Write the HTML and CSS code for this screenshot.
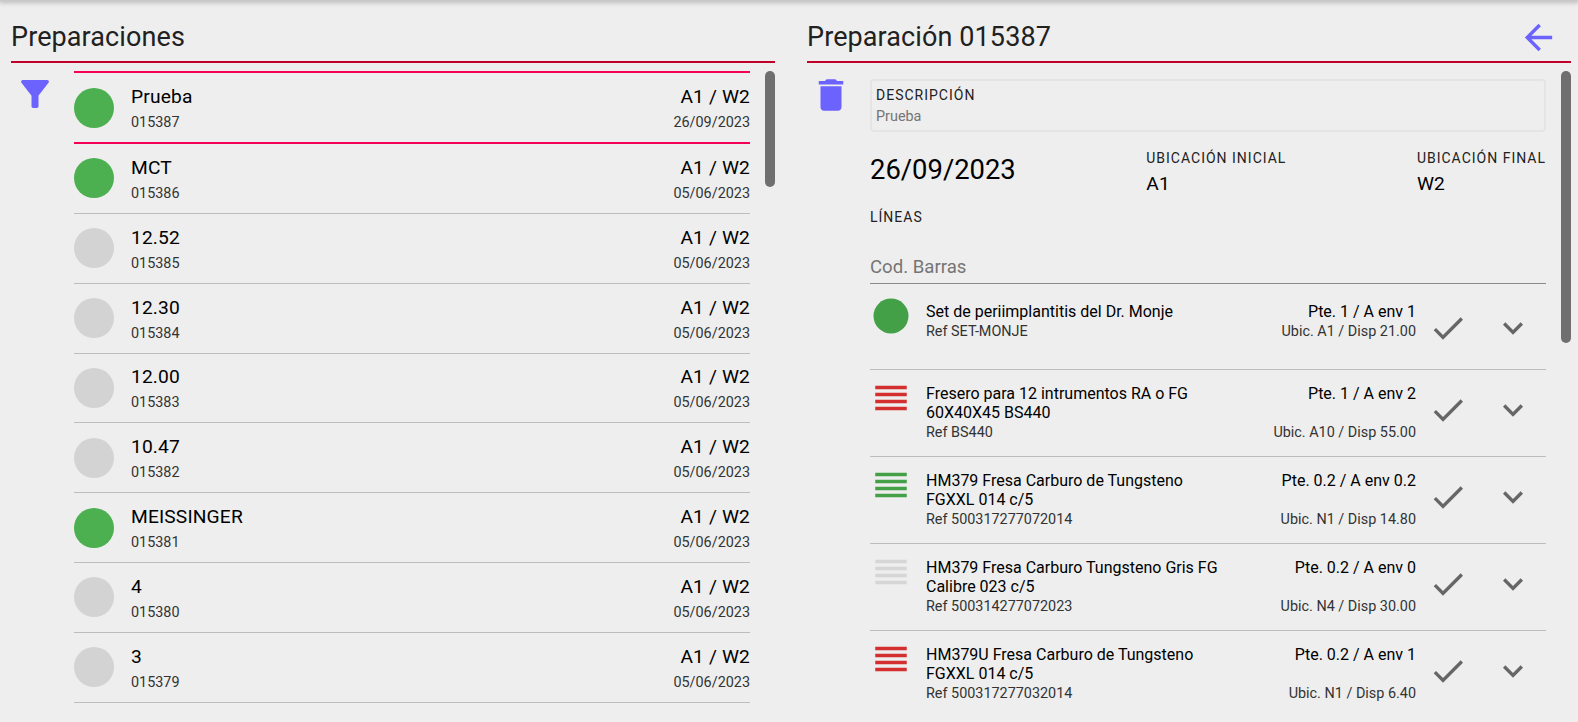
FILE: index.html
```html
<!DOCTYPE html>
<html lang="es">
<head>
    <meta charset="UTF-8">
    <meta name="viewport" content="width=device-width, initial-scale=1.0">
    <title>Preparaciones</title>
    <link rel="stylesheet" href="styles.css">
</head>
<body>
    <div class="topbar"></div>

    <main class="panels">
        <!-- listado -->
        <section class="panel panel-left">
            <header class="panel-head">
                <h1>Preparaciones</h1>
            </header>
            <div class="panel-body">
                <div class="side">
                    <svg class="icon-side" viewBox="0 0 24 24"><path d="M4.25 5.61C6.27 8.2 10 13 10 13v6c0 .55.45 1 1 1h2c.55 0 1-.45 1-1v-6s3.72-4.8 5.74-7.39A.998.998 0 0 0 18.95 4H5.04c-.83 0-1.3.95-.79 1.61z"/></svg>
                </div>
                <ul class="prep-list">
                    <li class="prep selected">
                        <span class="dot green"></span>
                        <div class="prep-main"><div class="big">Prueba</div><div class="small">015387</div></div>
                        <div class="prep-end"><div class="big">A1 / W2</div><div class="small">26/09/2023</div></div>
                    </li>
                    <li class="prep">
                        <span class="dot green"></span>
                        <div class="prep-main"><div class="big">MCT</div><div class="small">015386</div></div>
                        <div class="prep-end"><div class="big">A1 / W2</div><div class="small">05/06/2023</div></div>
                    </li>
                    <li class="prep">
                        <span class="dot"></span>
                        <div class="prep-main"><div class="big">12.52</div><div class="small">015385</div></div>
                        <div class="prep-end"><div class="big">A1 / W2</div><div class="small">05/06/2023</div></div>
                    </li>
                    <li class="prep">
                        <span class="dot"></span>
                        <div class="prep-main"><div class="big">12.30</div><div class="small">015384</div></div>
                        <div class="prep-end"><div class="big">A1 / W2</div><div class="small">05/06/2023</div></div>
                    </li>
                    <li class="prep">
                        <span class="dot"></span>
                        <div class="prep-main"><div class="big">12.00</div><div class="small">015383</div></div>
                        <div class="prep-end"><div class="big">A1 / W2</div><div class="small">05/06/2023</div></div>
                    </li>
                    <li class="prep">
                        <span class="dot"></span>
                        <div class="prep-main"><div class="big">10.47</div><div class="small">015382</div></div>
                        <div class="prep-end"><div class="big">A1 / W2</div><div class="small">05/06/2023</div></div>
                    </li>
                    <li class="prep">
                        <span class="dot green"></span>
                        <div class="prep-main"><div class="big">MEISSINGER</div><div class="small">015381</div></div>
                        <div class="prep-end"><div class="big">A1 / W2</div><div class="small">05/06/2023</div></div>
                    </li>
                    <li class="prep">
                        <span class="dot"></span>
                        <div class="prep-main"><div class="big">4</div><div class="small">015380</div></div>
                        <div class="prep-end"><div class="big">A1 / W2</div><div class="small">05/06/2023</div></div>
                    </li>
                    <li class="prep">
                        <span class="dot"></span>
                        <div class="prep-main"><div class="big">3</div><div class="small">015379</div></div>
                        <div class="prep-end"><div class="big">A1 / W2</div><div class="small">05/06/2023</div></div>
                    </li>
                </ul>
                <div class="thumb thumb-left"></div>
            </div>
        </section>

        <!-- detalle -->
        <section class="panel panel-right">
            <header class="panel-head">
                <h1>Preparación 015387</h1>
                <svg class="icon-back" viewBox="0 0 24 24"><path d="M20 11H7.83l5.59-5.59L12 4l-8 8 8 8 1.41-1.41L7.83 13H20v-2z"/></svg>
            </header>
            <div class="panel-body">
                <div class="side">
                    <svg class="icon-side icon-trash" viewBox="0 0 24 24"><path d="M6 19c0 1.1.9 2 2 2h8c1.1 0 2-.9 2-2V7H6v12zM19 4h-3.5l-1-1h-5l-1 1H5v2h14V4z"/></svg>
                </div>
                <div class="detail">
                    <div class="desc-box">
                        <div class="label">DESCRIPCIÓN</div>
                        <div class="desc-text">Prueba</div>
                    </div>
                    <div class="info">
                        <div class="date">26/09/2023</div>
                        <div><div class="label">UBICACIÓN INICIAL</div><div class="place">A1</div></div>
                        <div><div class="label">UBICACIÓN FINAL</div><div class="place">W2</div></div>
                    </div>
                    <div class="label lines-label">LÍNEAS</div>
                    <div class="barcode">Cod. Barras</div>
                    <ul class="lines">
                        <li class="line">
                            <svg class="state green-fill" viewBox="0 0 24 24"><circle cx="12" cy="12" r="10"/></svg>
                            <div class="line-body">
                                <div class="line-text"><div class="line-title">Set de periimplantitis del Dr. Monje</div><div class="line-sub">Ref SET-MONJE</div></div>
                                <div class="line-qty"><div class="line-title">Pte. 1 / A env 1</div><div class="line-sub">Ubic. A1 / Disp 21.00</div></div>
                            </div>
                            <svg class="act act-check" viewBox="0 0 24 24"><path d="M9 16.17L4.83 12l-1.42 1.41L9 19 21 7l-1.41-1.41z"/></svg>
                            <svg class="act act-more" viewBox="0 0 24 24"><path d="M16.59 8.59L12 13.17 7.41 8.59 6 10l6 6 6-6z"/></svg>
                        </li>
                        <li class="line">
                            <svg class="state red-fill" viewBox="0 0 24 24"><path d="M3 5h18v2H3zM3 9h18v2H3zM3 13h18v2H3zM3 17h18v2H3z"/></svg>
                            <div class="line-body">
                                <div class="line-text"><div class="line-title">Fresero para 12 intrumentos RA o FG 60X40X45 BS440</div><div class="line-sub">Ref BS440</div></div>
                                <div class="line-qty"><div class="line-title">Pte. 1 / A env 2</div><div class="line-sub">Ubic. A10 / Disp 55.00</div></div>
                            </div>
                            <svg class="act act-check" viewBox="0 0 24 24"><path d="M9 16.17L4.83 12l-1.42 1.41L9 19 21 7l-1.41-1.41z"/></svg>
                            <svg class="act act-more" viewBox="0 0 24 24"><path d="M16.59 8.59L12 13.17 7.41 8.59 6 10l6 6 6-6z"/></svg>
                        </li>
                        <li class="line">
                            <svg class="state green-fill" viewBox="0 0 24 24"><path d="M3 5h18v2H3zM3 9h18v2H3zM3 13h18v2H3zM3 17h18v2H3z"/></svg>
                            <div class="line-body">
                                <div class="line-text"><div class="line-title">HM379 Fresa Carburo de Tungsteno FGXXL 014 c/5</div><div class="line-sub">Ref 500317277072014</div></div>
                                <div class="line-qty"><div class="line-title">Pte. 0.2 / A env 0.2</div><div class="line-sub">Ubic. N1 / Disp 14.80</div></div>
                            </div>
                            <svg class="act act-check" viewBox="0 0 24 24"><path d="M9 16.17L4.83 12l-1.42 1.41L9 19 21 7l-1.41-1.41z"/></svg>
                            <svg class="act act-more" viewBox="0 0 24 24"><path d="M16.59 8.59L12 13.17 7.41 8.59 6 10l6 6 6-6z"/></svg>
                        </li>
                        <li class="line">
                            <svg class="state grey-fill" viewBox="0 0 24 24"><path d="M3 5h18v2H3zM3 9h18v2H3zM3 13h18v2H3zM3 17h18v2H3z"/></svg>
                            <div class="line-body">
                                <div class="line-text"><div class="line-title">HM379 Fresa Carburo Tungsteno Gris FG Calibre 023 c/5</div><div class="line-sub">Ref 500314277072023</div></div>
                                <div class="line-qty"><div class="line-title">Pte. 0.2 / A env 0</div><div class="line-sub">Ubic. N4 / Disp 30.00</div></div>
                            </div>
                            <svg class="act act-check" viewBox="0 0 24 24"><path d="M9 16.17L4.83 12l-1.42 1.41L9 19 21 7l-1.41-1.41z"/></svg>
                            <svg class="act act-more" viewBox="0 0 24 24"><path d="M16.59 8.59L12 13.17 7.41 8.59 6 10l6 6 6-6z"/></svg>
                        </li>
                        <li class="line">
                            <svg class="state red-fill" viewBox="0 0 24 24"><path d="M3 5h18v2H3zM3 9h18v2H3zM3 13h18v2H3zM3 17h18v2H3z"/></svg>
                            <div class="line-body">
                                <div class="line-text"><div class="line-title">HM379U Fresa Carburo de Tungsteno FGXXL 014 c/5</div><div class="line-sub">Ref 500317277032014</div></div>
                                <div class="line-qty"><div class="line-title">Pte. 0.2 / A env 1</div><div class="line-sub">Ubic. N1 / Disp 6.40</div></div>
                            </div>
                            <svg class="act act-check" viewBox="0 0 24 24"><path d="M9 16.17L4.83 12l-1.42 1.41L9 19 21 7l-1.41-1.41z"/></svg>
                            <svg class="act act-more" viewBox="0 0 24 24"><path d="M16.59 8.59L12 13.17 7.41 8.59 6 10l6 6 6-6z"/></svg>
                        </li>
                    </ul>
                </div>
                <div class="thumb thumb-right"></div>
            </div>
        </section>
    </main>
</body>
</html>
```

FILE: styles.css
```css
* {
    box-sizing: border-box;
}

html, body {
    height: 100%;
}

body {
    margin: 0;
    background-color: #eeeeee;
    font-family: Roboto, "Liberation Sans", sans-serif;
    color: #000;
    overflow: hidden;
}

ul {
    list-style: none;
    margin: 0;
    padding: 0;
}

.topbar {
    height: 1px;
    background-color: #c8c8c8;
    box-shadow: 0 0 5px 1px rgba(0, 0, 0, 0.35);
}

.panels {
    display: flex;
    gap: 32px;
    padding: 0 7px 0 11px;
    height: 721px;
}

.panel {
    width: 764px;
    display: flex;
    flex-direction: column;
}

.panel-head {
    height: 62px;
    flex: none;
    display: flex;
    align-items: flex-start;
    justify-content: space-between;
    border-bottom: 2px solid #c00028;
}

.panel-head h1 {
    margin: 19px 0 0;
    font-size: 27px;
    line-height: 34px;
    font-weight: 400;
    letter-spacing: 0.1px;
    color: #212121;
}

.icon-back {
    width: 41px;
    height: 41px;
    margin: 16px 12px 0 0;
    fill: #6c63ff;
}

.panel-body {
    display: flex;
    flex: 1;
    min-height: 0;
    padding-top: 8px;
}

.side {
    width: 63px;
    flex: none;
}

.icon-side {
    display: block;
    width: 42px;
    height: 42px;
    margin: 2px 0 0 3px;
    fill: #6c63ff;
}

.icon-trash {
    margin: 3px 0 0 3px;
}

/* scrollbars */
.thumb {
    width: 10px;
    flex: none;
    margin-left: 15px;
    background-color: #6f6f6f;
    border-radius: 5px;
}

.thumb-left {
    height: 116px;
}

.thumb-right {
    height: 272px;
}

/* list on the left */
.prep-list {
    width: 676px;
    flex: none;
}

.prep {
    display: flex;
    align-items: center;
    height: 69.85px;
    border-bottom: 1px solid #bdbdbd;
}

.prep.selected {
    height: 73px;
    border-top: 2px solid #f50057;
    border-bottom: 2px solid #f50057;
}

.dot {
    width: 40px;
    height: 40px;
    flex: none;
    border-radius: 50%;
    background-color: #d3d3d3;
}

.dot.green {
    background-color: #4caf50;
}

.prep-main {
    flex: 1;
    margin-left: 17px;
    padding-top: 3px;
}

.prep-end {
    padding-top: 3px;
    text-align: right;
}

.big {
    font-size: 19.2px;
    line-height: 24px;
    letter-spacing: 0.15px;
}

.small {
    margin-top: 4px;
    font-size: 14.4px;
    line-height: 20px;
    color: #333;
}

/* detail on the right */
.detail {
    width: 676px;
    flex: none;
    padding-top: 8px;
}

.desc-box {
    height: 53px;
    padding: 4px 4px 0;
    border: 2px solid #e4e4e4;
    border-radius: 4px;
}

.label {
    font-size: 14px;
    line-height: 20px;
    letter-spacing: 1px;
    color: #212121;
}

.desc-text {
    margin-top: 2px;
    font-size: 14.4px;
    line-height: 20px;
    color: #757575;
}

.info {
    display: flex;
    justify-content: space-between;
    margin-top: 16px;
}

.date {
    margin-top: 4px;
    font-size: 27.4px;
    line-height: 36px;
}

.place {
    margin-top: 4px;
    font-size: 19.2px;
    line-height: 24px;
    letter-spacing: 0.15px;
}

.lines-label {
    margin-top: 11px;
}

.barcode {
    margin-top: 27px;
    height: 30px;
    font-size: 18.6px;
    line-height: 26px;
    color: #757575;
    border-bottom: 1px solid #8a8a8a;
}

.lines {
    padding-top: 3.5px;
}

.line {
    display: flex;
    align-items: flex-start;
    min-height: 82px;
    padding: 14px 13px 14px 0;
    border-bottom: 1px solid #bdbdbd;
}

.line:last-child {
    border-bottom: none;
}

.state {
    width: 42px;
    height: 42px;
    flex: none;
    margin: -7px 14px 0 0;
}

.green-fill {
    fill: #43a047;
}

.red-fill {
    fill: #d32f2f;
}

.grey-fill {
    fill: #d6d6d6;
}

/* the two columns share one height so Ubic. sits level with Ref */
.line-body {
    display: flex;
    flex: 1;
}

.line-text {
    width: 300px;
    flex: none;
}

.line-qty {
    flex: 1;
    display: flex;
    flex-direction: column;
    justify-content: space-between;
    text-align: right;
}

.line-title {
    font-size: 16px;
    line-height: 19px;
}

.line-sub {
    margin-top: 1px;
    font-size: 14.4px;
    line-height: 19px;
    color: #333;
}

.act {
    width: 40px;
    height: 40px;
    flex: none;
    margin-top: 6px;
    fill: #666;
}

.act-check {
    margin-left: 12px;
}

.act-more {
    margin-left: 25px;
}
```
